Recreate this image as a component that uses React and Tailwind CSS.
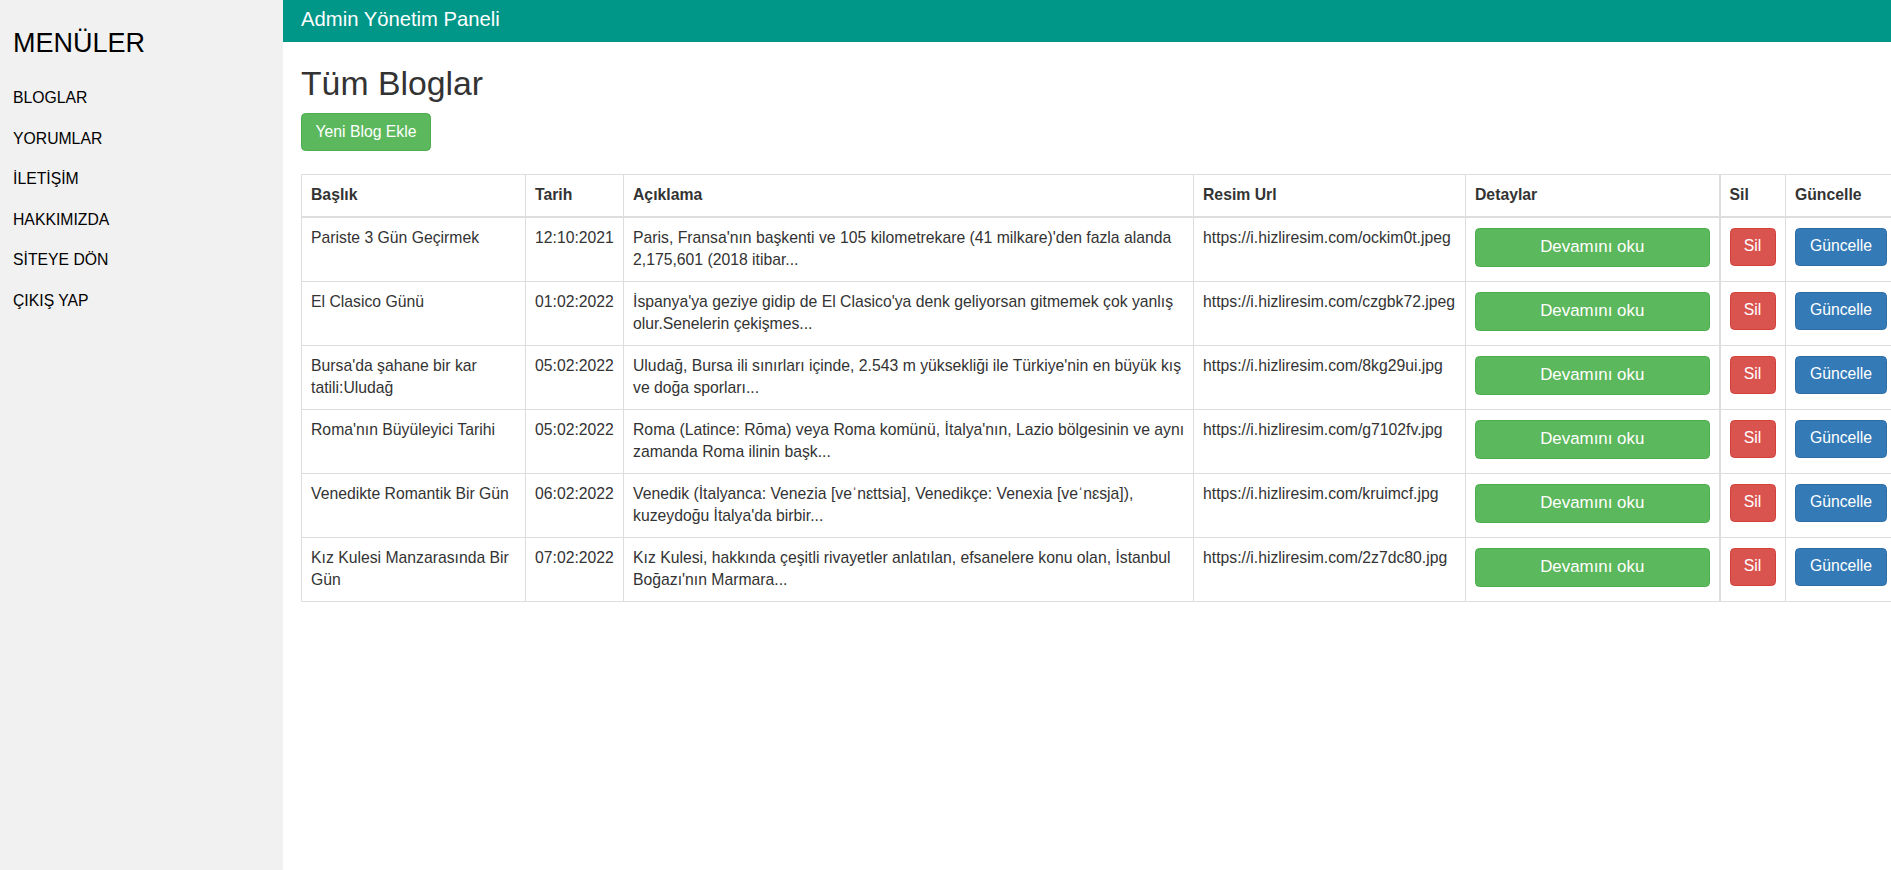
const MENU = ['BLOGLAR', 'YORUMLAR', 'İLETİŞİM', 'HAKKIMIZDA', 'SİTEYE DÖN', 'ÇIKIŞ YAP']

// desc lines are split where the original wraps
const BLOGS = [
  {
    title: ['Pariste 3 Gün Geçirmek'],
    date: '12:10:2021',
    desc: ["Paris, Fransa'nın başkenti ve 105 kilometrekare (41 milkare)'den fazla alanda", '2,175,601 (2018 itibar...'],
    url: 'https://i.hizliresim.com/ockim0t.jpeg',
  },
  {
    title: ['El Clasico Günü'],
    date: '01:02:2022',
    desc: ["İspanya'ya geziye gidip de El Clasico'ya denk geliyorsan gitmemek çok yanlış", 'olur.Senelerin çekişmes...'],
    url: 'https://i.hizliresim.com/czgbk72.jpeg',
  },
  {
    title: ["Bursa'da şahane bir kar", 'tatili:Uludağ'],
    date: '05:02:2022',
    desc: ["Uludağ, Bursa ili sınırları içinde, 2.543 m yüksekliği ile Türkiye'nin en büyük kış", 've doğa sporları...'],
    url: 'https://i.hizliresim.com/8kg29ui.jpg',
  },
  {
    title: ["Roma'nın Büyüleyici Tarihi"],
    date: '05:02:2022',
    desc: ["Roma (Latince: Rōma) veya Roma komünü, İtalya'nın, Lazio bölgesinin ve aynı", 'zamanda Roma ilinin başk...'],
    url: 'https://i.hizliresim.com/g7102fv.jpg',
  },
  {
    title: ['Venedikte Romantik Bir Gün'],
    date: '06:02:2022',
    desc: ['Venedik (İtalyanca: Venezia [veˈnɛttsia], Venedikçe: Venexia [veˈnɛsja]),', "kuzeydoğu İtalya'da birbir..."],
    url: 'https://i.hizliresim.com/kruimcf.jpg',
  },
  {
    title: ['Kız Kulesi Manzarasında Bir', 'Gün'],
    date: '07:02:2022',
    desc: ['Kız Kulesi, hakkında çeşitli rivayetler anlatılan, efsanelere konu olan, İstanbul', "Boğazı'nın Marmara..."],
    url: 'https://i.hizliresim.com/2z7dc80.jpg',
  },
]

const cell = 'border border-[#ddd] px-[9px] py-[9px] align-top'
const th = 'border border-b-2 border-[#ddd] px-[9px] py-[9px] align-bottom'

function Lines({ lines }) {
  return lines.map((l, i) => (
    <div key={i} className="whitespace-nowrap">{l}</div>
  ))
}

export default function App() {
  return (
    <div className="flex min-h-screen w-full overflow-hidden bg-white text-[#333] font-['Liberation_Sans',Arial,sans-serif]">
      {/* Sidebar */}
      <aside className="w-[283px] shrink-0 bg-[#f1f1f1] pt-[27px] text-black">
        <h3 className="pl-[13px] text-[27px] leading-[32px] mb-[19px]">MENÜLER</h3>
        {MENU.map(m => (
          <div key={m} className="h-[40.6px] pl-[13px] text-[15.75px] leading-[40.6px]">{m}</div>
        ))}
      </aside>

      {/* Main */}
      <main className="flex-1 min-w-0 overflow-hidden">
        <div className="h-[42px] bg-[#009688] pl-[18px] pt-[6px] text-[20.25px] leading-[27px] text-white">
          Admin Yönetim Paneli
        </div>

        <div className="pl-[18px]">
          <h2 className="mt-[23px] mb-[11px] text-[33.75px] leading-[37px] text-[#333]">Tüm Bloglar</h2>
          <button className="flex h-[38px] w-[130px] items-center justify-center rounded-[4.5px] border border-[#4cae4c] bg-[#5cb85c] text-[15.75px] text-white">
            Yeni Blog Ekle
          </button>

          <table className="mt-[23px] w-[1595px] max-w-none table-fixed border-collapse border border-[#ddd] text-[15.75px] leading-[22.5px]">
            <colgroup>
              <col className="w-[224px]" />
              <col className="w-[98px]" />
              <col className="w-[570px]" />
              <col className="w-[272px]" />
              <col className="w-[254px]" />
              <col className="w-[66px]" />
              <col className="w-[111px]" />
            </colgroup>
            <thead>
              <tr className="text-left font-bold">
                <th className={th}>Başlık</th>
                <th className={th}>Tarih</th>
                <th className={th}>Açıklama</th>
                <th className={th}>Resim Url</th>
                <th className={th}>Detaylar</th>
                <th className={`${th} border-l-2`}>Sil</th>
                <th className={th}>Güncelle</th>
              </tr>
            </thead>
            <tbody>
              {BLOGS.map(b => (
                <tr key={b.url}>
                  <td className={cell}><Lines lines={b.title} /></td>
                  <td className={cell}>{b.date}</td>
                  <td className={cell}><Lines lines={b.desc} /></td>
                  <td className={cell}>{b.url}</td>
                  <td className={`${cell} pt-[10px]`}>
                    <button className="flex h-[39px] w-full items-center justify-center rounded-[4.5px] border border-[#4cae4c] bg-[#5cb85c] text-[16.9px] text-white">
                      Devamını oku
                    </button>
                  </td>
                  <td className={`${cell} border-l-2 pt-[10px]`}>
                    <button className="flex h-[38px] w-[46px] items-center justify-center rounded-[4.5px] border border-[#d43f3a] bg-[#d9534f] text-[15.75px] text-white">
                      Sil
                    </button>
                  </td>
                  <td className={`${cell} pt-[10px]`}>
                    <button className="flex h-[38px] w-[92px] items-center justify-center rounded-[4.5px] border border-[#2e6da4] bg-[#337ab7] text-[15.75px] text-white">
                      Güncelle
                    </button>
                  </td>
                </tr>
              ))}
            </tbody>
          </table>
        </div>
      </main>
    </div>
  )
}
